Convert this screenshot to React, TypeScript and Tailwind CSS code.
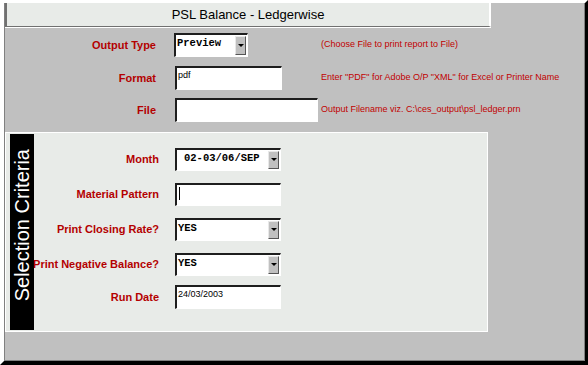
const sans = "font-['Liberation_Sans',Arial,sans-serif]";
const mono = "font-['Liberation_Mono','Courier_New',monospace]";

function Arrow() {
  return (
    <div className="my-[1px] mr-[1px] flex w-[11px] items-center justify-center border-t border-l border-t-[#e8e8e8] border-l-[#e8e8e8] border-r border-b border-r-[#555] border-b-[#555] bg-[#c0c0c0]">
      <div className="mb-[1px] h-0 w-0 border-x-[3px] border-t-[3px] border-x-transparent border-t-black" />
    </div>
  );
}

function Select({ value, width, indent }: { value: string; width: string; indent?: boolean }) {
  return (
    <div
      className={`flex h-full border-t-2 border-l-2 border-t-[#1e1e1e] border-l-[#1e1e1e] border-r border-b border-r-white border-b-white bg-white ${width}`}
    >
      <div
        className={`flex-1 pt-[2px] text-[10.5px] leading-[13px] font-bold text-black ${mono} ${indent ? 'pl-[7px]' : 'pl-[1px]'}`}
      >
        {value}
      </div>
      <Arrow />
    </div>
  );
}

function Field({ value, width, cursor }: { value?: string; width: string; cursor?: boolean }) {
  return (
    <div
      className={`h-full border-t-2 border-l-2 border-t-[#1e1e1e] border-l-[#1e1e1e] border-r border-b border-r-white border-b-white bg-white pl-[1px] pt-[1px] text-[9px] leading-[12px] text-black ${sans} ${width}`}
    >
      {cursor ? <div className="mt-[1px] ml-[1px] h-[13px] w-[1px] bg-black" /> : value}
    </div>
  );
}

function TopRow({
  label,
  help,
  children,
  className,
}: {
  label: string;
  help: string;
  children: React.ReactNode;
  className?: string;
}) {
  return (
    <div className={`flex h-[24px] items-center ${className ?? ''}`}>
      <div className="flex w-[151px] justify-end whitespace-nowrap text-[11px] font-bold text-[#b40000]">{label}</div>
      <div className="ml-[19px] flex h-full w-[146px]">{children}</div>
      <div className="whitespace-nowrap text-[9px] text-[#c00000]">{help}</div>
    </div>
  );
}

function CritRow({
  label,
  children,
  className,
}: {
  label: string;
  children: React.ReactNode;
  className?: string;
}) {
  return (
    <div className={`flex items-center ${className ?? ''}`}>
      <div className="flex w-[125px] justify-end whitespace-nowrap text-[11px] font-bold text-[#b40000]">{label}</div>
      <div className="ml-[16px] flex h-full">{children}</div>
    </div>
  );
}

export default function App() {
  return (
    <div
      className={`h-[365px] w-[588px] border-t-[3px] border-l-[4px] border-t-white border-l-white border-r-[3px] border-b-[4px] border-r-black border-b-black bg-[#c0c0c0] ${sans}`}
    >
      <div className="h-full border-l border-r border-b border-[#808080]">
        <div className="flex h-[24px] w-[486px] items-center justify-center border-l-2 border-l-[#707070] border-b border-b-[#707070] border-r-2 border-r-white bg-[#e8ebe8] text-[13px] text-black shadow-[0_1px_0_#fff]">
          PSL Balance - Ledgerwise
        </div>

        <TopRow label="Output Type" help="(Choose File to print report to File)" className="mt-[6px]">
          <div className="-ml-[1px] h-full">
            <Select value="Preview" width="w-[74px]" />
          </div>
        </TopRow>
        <TopRow
          label="Format"
          help={'Enter "PDF" for Adobe O/P "XML" for Excel or Printer Name'}
          className="mt-[9px]"
        >
          <Field value="pdf" width="w-[107px]" />
        </TopRow>
        <TopRow
          label="File"
          help="Output Filename viz. C:\ces_output\psl_ledger.prn"
          className="mt-[8px]"
        >
          <Field width="w-[143px]" />
        </TopRow>

        <div className="mt-[10px] flex h-[200px] w-[483px] border border-white bg-[#e8ebe8] pl-[4px]">
          <div className="my-[1px] flex w-[24px] items-center justify-center bg-black pb-[14px]">
            <div className="rotate-180 whitespace-nowrap text-[20px] leading-[24px] text-white [writing-mode:vertical-rl]">
              Selection Criteria
            </div>
          </div>
          <div className="flex flex-col pt-[15px]">
            <CritRow label="Month" className="h-[23px]">
              <Select value="02-03/06/SEP" width="w-[106px]" indent />
            </CritRow>
            <CritRow label="Material Pattern" className="mt-[12px] h-[23px]">
              <Field width="w-[106px]" cursor />
            </CritRow>
            <CritRow label="Print Closing Rate?" className="mt-[12px] h-[23px]">
              <Select value="YES" width="w-[106px]" />
            </CritRow>
            <CritRow label="Print Negative Balance?" className="mt-[12px] h-[23px]">
              <Select value="YES" width="w-[106px]" />
            </CritRow>
            <CritRow label="Run Date" className="mt-[9px] h-[24px]">
              <Field value="24/03/2003" width="w-[106px]" />
            </CritRow>
          </div>
        </div>
      </div>
    </div>
  );
}
